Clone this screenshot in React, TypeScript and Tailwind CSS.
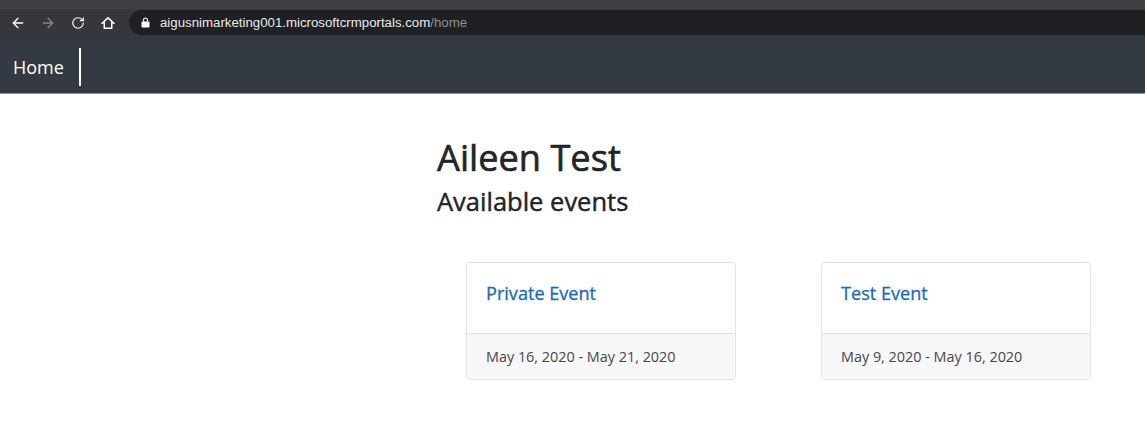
import { ArrowLeft, ArrowRight, RotateCw } from "lucide-react";

function Card({ title, dates }: { title: string; dates: string }) {
  return (
    <div className="w-[270px] h-[118px] flex flex-col rounded-[4px] border border-[#e4e4e4] overflow-hidden bg-white">
      <div className="h-[70px] pl-[19px] pt-[17px] text-[18.1px] leading-[27px] [-webkit-text-stroke:0.3px_#1a6bb5] text-[#1a6bb5]">{title}</div>
      <div className="flex-1 pl-[19px] pt-[13px] text-[14.4px] leading-[20px] text-[#45494d] bg-[#f7f7f7] border-t border-[#e2e2e2]">{dates}</div>
    </div>
  );
}

export default function App() {
  return (
    <div className="w-[1145px] h-[447px] overflow-hidden bg-white font-['Open_Sans','Noto_Sans',sans-serif]">
      <div className="h-[9px] bg-[#3f4042]" />
      <div className="h-[31px] bg-[#36373a] flex items-start pl-[10px] pt-[1px]">
        <div className="h-[25px] flex items-center w-[119px] text-white">
          <ArrowLeft size={16} strokeWidth={2} />
          <ArrowRight size={16} strokeWidth={2} className="text-[#85878a] ml-[14px]" />
          <RotateCw size={14} strokeWidth={2} className="ml-[15px]" />
          <svg width="14" height="14" viewBox="0 0 15 15" fill="none" stroke="white" strokeWidth="1.6" className="ml-[16px]">
            <path d="M7.5 2 L13.5 7.5 H11.5 V13 H3.5 V7.5 H1.5 Z" />
          </svg>
        </div>
        <div className="flex-1 h-[25px] bg-[#1f2023] rounded-l-full flex items-center pl-[12px]">
          <svg width="9" height="11" viewBox="0 0 9 11" fill="white" className="mr-[10px]">
            <path d="M2.5 4.5 V3 a2 2 0 0 1 4 0 V4.5" fill="none" stroke="white" strokeWidth="1.2" />
            <rect x="0.5" y="4.5" width="8" height="6" rx="1" />
          </svg>
          <span className="font-['Liberation_Sans',sans-serif] text-[13.25px] text-[#e8eaed]">
            aigusnimarketing001.microsoftcrmportals.com<span className="text-[#8f9296]">/home</span>
          </span>
        </div>
      </div>
      <div className="h-[54px] bg-[#343a42] border-b border-[#8b9399] flex items-center pl-[13px]">
        <span className="text-[18px] text-white pt-[2px]">Home</span>
        <div className="w-[2px] h-[38px] bg-white ml-[15px]" />
      </div>
      <div className="pl-[437px] pt-[38px]">
        <h1 className="text-[36.2px] leading-[50px] [-webkit-text-stroke:0.6px_#212529] text-[#212529]">Aileen Test</h1>
        <h2 className="text-[25.5px] leading-[34px] [-webkit-text-stroke:0.45px_#212529] text-[#212529] mt-[2px]">Available events</h2>
        <div className="flex gap-[85px] pl-[29px] mt-[44px]">
          <Card title="Private Event" dates="May 16, 2020 - May 21, 2020" />
          <Card title="Test Event" dates="May 9, 2020 - May 16, 2020" />
        </div>
      </div>
    </div>
  );
}
